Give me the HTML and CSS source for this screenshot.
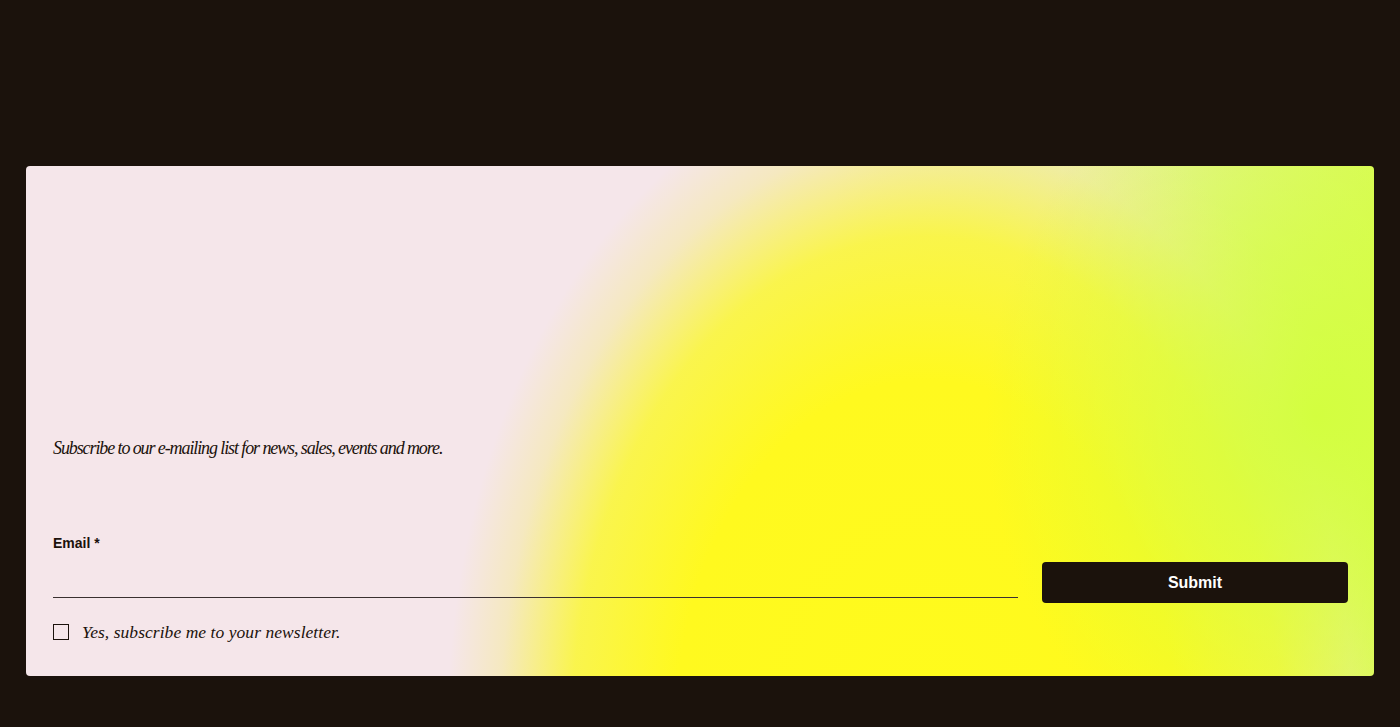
FILE: index.html
```html
<!DOCTYPE html>
<html lang="en">
<head>
<meta charset="utf-8">
<title>Subscribe</title>
<link rel="stylesheet" href="styles.css">
</head>
<body>
<main class="page">
  <section class="card">
    <p class="intro">Subscribe to our e-mailing list for news, sales, events and more.</p>
    <form class="form">
      <label class="label" for="email">Email *</label>
      <div class="row">
        <input class="field" id="email" type="email" required>
        <button class="submit" type="button">Submit</button>
      </div>
      <label class="check">
        <span class="box"></span>
        <span class="check-text">Yes, subscribe me to your newsletter.</span>
      </label>
    </form>
  </section>
</main>
</body>
</html>
```
FILE: styles.css
```css
html, body {
  margin: 0;
  padding: 0;
  background: #1b120c;
}
.page {
  padding: 166px 26px 51px 26px;
}
.card {
  box-sizing: border-box;
  height: 510px;
  border-radius: 4px;
  padding: 270px 26px 0 27px;
  display: flex;
  flex-direction: column;
  background:
    radial-gradient(ellipse 330px 380px at 1290px 250px, rgba(210,255,60,0.95) 0%, rgba(212,255,60,0.6) 45%, rgba(214,255,70,0) 100%),
    radial-gradient(ellipse 520px 720px at 900px 560px, #fffb1c 0%, #fff91f 48%, rgba(250,246,60,0.9) 68%, rgba(245,235,150,0.5) 82%, rgba(245,230,234,0) 92%),
    linear-gradient(90deg, rgba(245,230,234,0) 60%, rgba(218,250,95,1) 100%),
    #f5e6ea;
}
.intro {
  margin: 0;
  font-family: "Liberation Serif", serif;
  font-style: italic;
  font-size: 18px;
  line-height: 24px;
  letter-spacing: -1.1px;
  color: #1b120c;
}
.form {
  display: flex;
  flex-direction: column;
  margin-top: 74px;
}
.label {
  font-family: "Liberation Sans", Arial, sans-serif;
  font-weight: bold;
  font-size: 14px;
  line-height: 18px;
  color: #1b120c;
}
.row {
  display: flex;
  gap: 24px;
  margin-top: 6px;
  align-items: flex-start;
}
.field {
  flex: 1;
  box-sizing: border-box;
  height: 40px;
  border: none;
  border-bottom: 1px solid #3a3030;
  background: transparent;
  outline: none;
  margin: 0;
  padding: 0;
}
.submit {
  width: 306px;
  height: 41px;
  margin-top: 4px;
  border: none;
  border-radius: 4px;
  background: #1b120c;
  color: #ffffff;
  font-family: "Liberation Sans", Arial, sans-serif;
  font-weight: bold;
  font-size: 16px;
  padding: 0;
}
.check {
  display: flex;
  align-items: center;
  gap: 13px;
  margin-top: 20px;
}
.box {
  box-sizing: border-box;
  width: 16px;
  height: 16px;
  border: 1px solid #1b120c;
}
.check-text {
  font-family: "Liberation Serif", serif;
  font-style: italic;
  font-size: 17.5px;
  line-height: 18px;
  letter-spacing: 0.05px;
  color: #1b120c;
}
```
